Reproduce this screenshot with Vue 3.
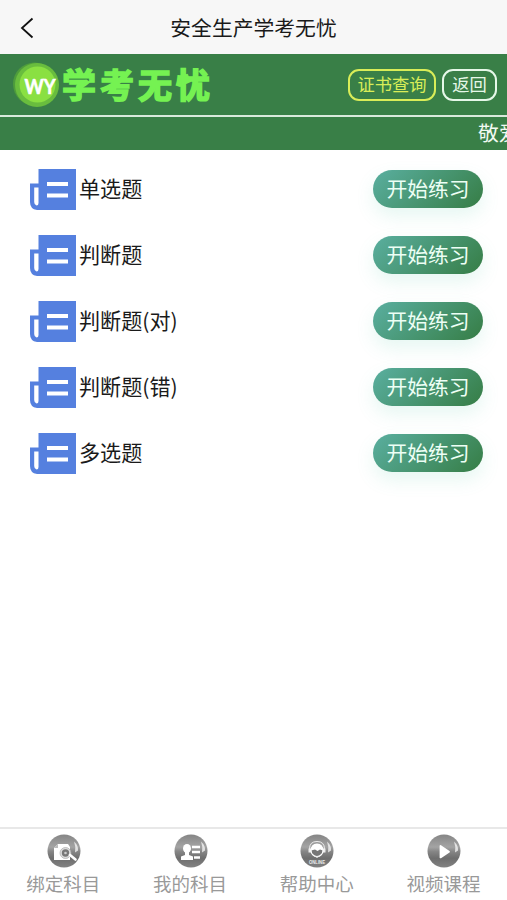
<script setup>
const rows = ['单选题', '判断题', '判断题(对)', '判断题(错)', '多选题']
const tabs = [
  { label: '绑定科目', icon: 'search' },
  { label: '我的科目', icon: 'user' },
  { label: '帮助中心', icon: 'help' },
  { label: '视频课程', icon: 'play' },
]
</script>

<template>
  <div class="page">
    <header class="titlebar">
      <svg class="back" viewBox="0 0 14 22"><path d="M12.500 1.500 2 11l10.500 9.500" /></svg>
      <h1>安全生产学考无忧</h1>
    </header>

    <div class="brandbar">
      <svg class="badge" viewBox="0 0 48 48">
        <circle cx="22.500" cy="23" r="21.500" fill="#4e9c3c" />
        <circle cx="25" cy="24" r="22" fill="#69bd3e" />
        <circle cx="25.500" cy="23.500" r="18" fill="#8ae042" />
        <text x="12.500" y="32.500" textLength="31" lengthAdjust="spacingAndGlyphs">WY</text>
      </svg>
      <span class="brand">学考无忧</span>
      <div class="actions">
        <button class="pill query">证书查询</button>
        <button class="pill return">返回</button>
      </div>
    </div>

    <div class="notice"><span>敬爱</span></div>

    <main class="list">
      <div v-for="row in rows" :key="row" class="row">
        <svg class="doc" viewBox="0 0 46 41">
          <path fill="#5580df" d="M8.500 0H46v41H7q-7-1-7-8V14.500h8.500z" />
          <path d="M4.200 18.500h4.300v15.500q0 2.500-2 2.500-2.300-.5-2.300-3.500z" fill="#fff" />
          <path d="M17 15h21M17 26.500h21" stroke="#fff" stroke-width="4.200" />
        </svg>
        <span class="name">{{ row }}</span>
        <button class="start">开始练习</button>
      </div>
    </main>

    <nav class="tabs">
      <a v-for="tab in tabs" :key="tab.icon" class="tab">
        <svg class="orb" viewBox="0 0 34 34">
          <defs>
            <linearGradient :id="'g-' + tab.icon" x1="0" y1="0" x2="0" y2="1">
              <stop offset="0" stop-color="#858585" />
              <stop offset=".38" stop-color="#a4a4a4" />
              <stop offset=".52" stop-color="#858585" />
              <stop offset=".72" stop-color="#6e6e6e" />
              <stop offset="1" stop-color="#828282" />
            </linearGradient>
          </defs>
          <circle cx="17" cy="17" r="16.500" :fill="`url(#g-${tab.icon})`" />
          <path d="M27 7.500q4.500 4 4 9l-3 2q1-6-1-11z" fill="#fff" opacity=".7" />
          <g v-if="tab.icon === 'search'">
            <path d="M7 14l4-4h10l2 3v13H7z" fill="#fff" />
            <path d="M7 14l4-4v4z" fill="#bbb" />
            <circle cx="18.500" cy="19" r="5.500" fill="#ddd" stroke="#aaa" stroke-width=".7" />
            <circle cx="18.500" cy="19" r="3.700" fill="#777" />
            <circle cx="18.500" cy="19" r="1.300" fill="#ccc" />
            <path d="M23 21l5.500 4.500" stroke="#fff" stroke-width="2.600" stroke-linecap="round" />
          </g>
          <g v-else-if="tab.icon === 'user'" fill="#fff">
            <ellipse cx="13" cy="14.500" rx="4" ry="4.500" />
            <path d="M11 18h4v3l4 1.500V26H7v-3.500l4-1.500z" />
            <path d="M18 13h8M18 18h8M20 23.500h6" stroke="#fff" stroke-width="2.400" />
          </g>
          <g v-else-if="tab.icon === 'help'">
            <path d="M9.500 15q0-7.500 7.500-7.500t7.500 7.500" fill="none" stroke="#eee" />
            <path d="M8.500 14.500h3v4h-3zM22.500 14.500h3v4h-3z" fill="#eee" />
            <circle cx="17" cy="16.500" r="6" fill="#777" stroke="#fff" stroke-width="1.200" />
            <path d="M11 16.500q0-7 6-7t6 7l-3-1-2.500 1.500-2.500-1.500z" fill="#fff" />
            <path d="M14 22h6l-3 2z" fill="#eee" />
            <text class="online" x="9" y="29.500" textLength="16" lengthAdjust="spacingAndGlyphs">ONLINE</text>
          </g>
          <path v-else d="M13.500 12l8.500 5.700-8.500 5.700z" fill="#fff" stroke="#fff" stroke-width="1.800" stroke-linejoin="round" />
        </svg>
        <span>{{ tab.label }}</span>
      </a>
    </nav>
  </div>
</template>

<style>
body {
  margin: 0;
  background: #fff;
}
</style>

<style scoped>
.page {
  height: 900px;
  display: flex;
  flex-direction: column;
  overflow: hidden;
  background: #fff;
  color: #1a1a1a;
  font-family: "Noto Sans CJK SC", sans-serif;
}
button {
  box-sizing: border-box;
  font-family: inherit;
  padding: 0;
  margin: 0;
}
.titlebar {
  height: 54px;
  flex: none;
  display: grid;
  grid-template-columns: 40px 1fr 40px;
  align-items: center;
  background: #f7f7f7;
}
.back {
  width: 14px;
  height: 22px;
  margin-left: 20px;
  margin-top: 2px;
  fill: none;
  stroke: #111;
  stroke-width: 1.8;
}
h1 {
  margin: 0;
  text-align: center;
  font-size: 20.8px;
  line-height: 54px;
  font-weight: 400;
}
.brandbar {
  height: 61px;
  flex: none;
  box-sizing: border-box;
  display: flex;
  align-items: center;
  padding: 0 10px 0 12px;
  background: #397f47;
}
.badge {
  width: 48px;
  height: 48px;
  flex: none;
}
.badge text {
  font: 700 20px Lato, "Noto Sans", sans-serif;
  fill: #fff;
  stroke: #fff;
  stroke-width: 0.6;
}
.brand {
  margin-left: 2px;
  margin-top: -1px;
  font-size: 34px;
  line-height: 60px;
  font-weight: 700;
  letter-spacing: 4px;
  color: #75f252;
  -webkit-text-stroke: 1.6px #75f252;
}
.actions {
  display: flex;
  gap: 6px;
  margin-left: auto;
}
.pill {
  height: 32px;
  border: 2px solid;
  border-radius: 11px;
  background: none;
  font-size: 17.3px;
  line-height: 26px;
  padding-bottom: 1px;
}
.query {
  width: 88px;
  color: #d9ed58;
}
.return {
  width: 55px;
  color: #e6f8e9;
}
.notice {
  height: 35px;
  flex: none;
  box-sizing: border-box;
  border-top: 2px solid #d9eadc;
  padding-left: 478px;
  overflow: hidden;
  white-space: nowrap;
  background: #397f47;
  color: #f1faf2;
  font-size: 20.8px;
  line-height: 31px;
}
.list {
  flex: 1;
  padding: 6px 24px 0 30px;
}
.row {
  height: 66px;
  display: flex;
  align-items: center;
}
.doc {
  width: 46px;
  height: 41px;
  flex: none;
  fill: none;
}
.name {
  margin-left: 3px;
  padding-bottom: 3px;
  font-family: "Noto Sans CJK SC", sans-serif;
  font-size: 21.1px;
}
.start {
  width: 110px;
  height: 38px;
  margin-left: auto;
  padding-bottom: 2px;
  border: 0;
  border-radius: 19px;
  background: linear-gradient(135deg, #5aafa0, #367d45);
  box-shadow: 0 8px 18px rgba(90, 200, 170, 0.15);
  color: #edfff5;
  font-size: 20.8px;
  line-height: 36px;
}
.tabs {
  height: 73px;
  flex: none;
  box-sizing: border-box;
  border-top: 2px solid #e8e8e8;
  display: grid;
  grid-template-columns: repeat(4, 1fr);
}
.tab {
  display: flex;
  flex-direction: column;
  align-items: center;
  padding-top: 5px;
  color: #999;
  font-size: 18.5px;
  line-height: 31px;
}
.orb {
  width: 34px;
  height: 34px;
  margin-left: 1px;
}
.online {
  font: 700 6px "Liberation Sans", sans-serif;
  fill: #eee;
}
</style>
